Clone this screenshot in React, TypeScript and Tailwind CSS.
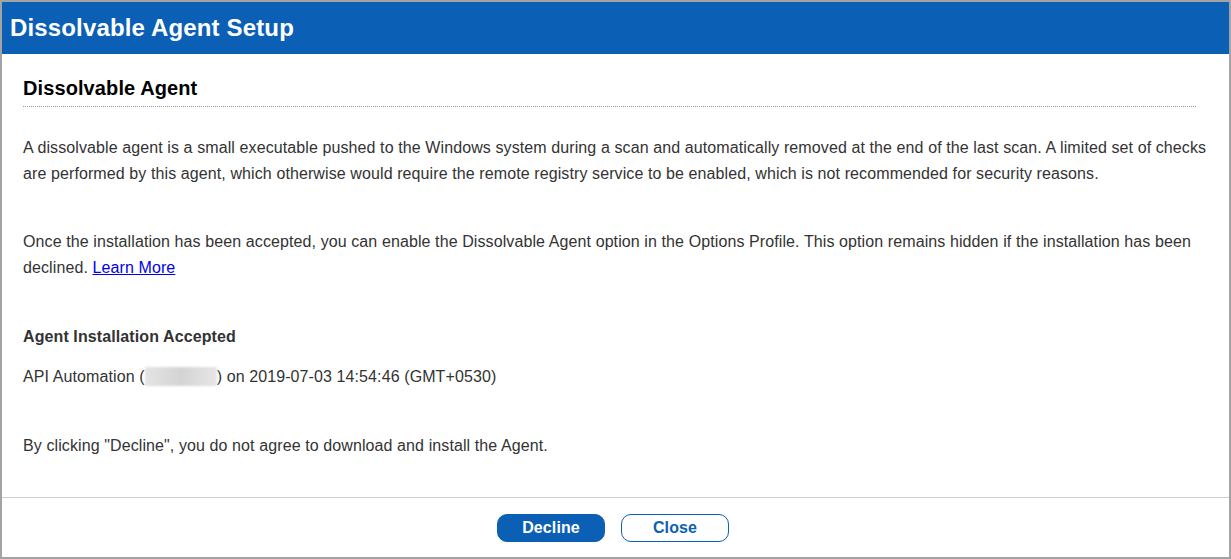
import React from 'react';

export default function App() {
  return (
    <div className="h-[559px] w-[1231px] flex flex-col border-2 border-[#a3a3a3] bg-white text-[#333] font-['Liberation_Sans',Arial,sans-serif] tracking-[0.1px]">
      <div className="h-[52px] shrink-0 bg-[#0b5fb4] flex items-center pl-[8px]">
        <h1 className="text-white font-bold text-[24px] leading-none tracking-[0.15px]">Dissolvable Agent Setup</h1>
      </div>
      <div className="flex-1 pl-[21px] pr-[20px]">
        <div className="mt-[22px] mr-[13px] border-b border-dotted border-[#999] pb-[6px]">
          <h2 className="text-[20px] leading-[24px] font-bold text-black">Dissolvable Agent</h2>
        </div>
        <p className="mt-[28px] text-[16px] leading-[26px]">
          A dissolvable agent is a small executable pushed to the Windows system during a scan and automatically removed at the end of the last scan. A limited set of checks are performed by this agent, which otherwise would require the remote registry service to be enabled, which is not recommended for security reasons.
        </p>
        <p className="mt-[42px] text-[16px] leading-[26px]">
          Once the installation has been accepted, you can enable the Dissolvable Agent option in the Options Profile. This option remains hidden if the installation has been declined.{' '}
          <a href="#" className="text-[#0000ee] underline">Learn More</a>
        </p>
        <p className="mt-[43px] text-[16px] leading-[26px] font-bold">Agent Installation Accepted</p>
        <p className="mt-[14px] text-[16px] leading-[26px]">
          API Automation (
          <span className="inline-block align-middle w-[72px] h-[19px] -mt-[3px] bg-gradient-to-r from-[#e4e4e4] via-[#d4d4d4] to-[#e6e6e6] blur-[1px]" />
          ) on 2019-07-03 14:54:46 (GMT+0530)
        </p>
        <p className="mt-[43px] text-[16px] leading-[26px]">
          By clicking "Decline", you do not agree to download and install the Agent.
        </p>
      </div>
      <div className="h-[60px] shrink-0 border-t border-[#cfcfcf] flex justify-center pt-[16px] pr-[5px] gap-[16px]">
        <button className="w-[108px] h-[28px] rounded-[10px] bg-[#0b5fb4] text-white font-bold text-[16px] border border-[#0b5fb4]">Decline</button>
        <button className="w-[108px] h-[28px] rounded-[10px] bg-white text-[#0b5fb4] font-bold text-[16px] border border-[#0b5fb4]">Close</button>
      </div>
    </div>
  );
}
